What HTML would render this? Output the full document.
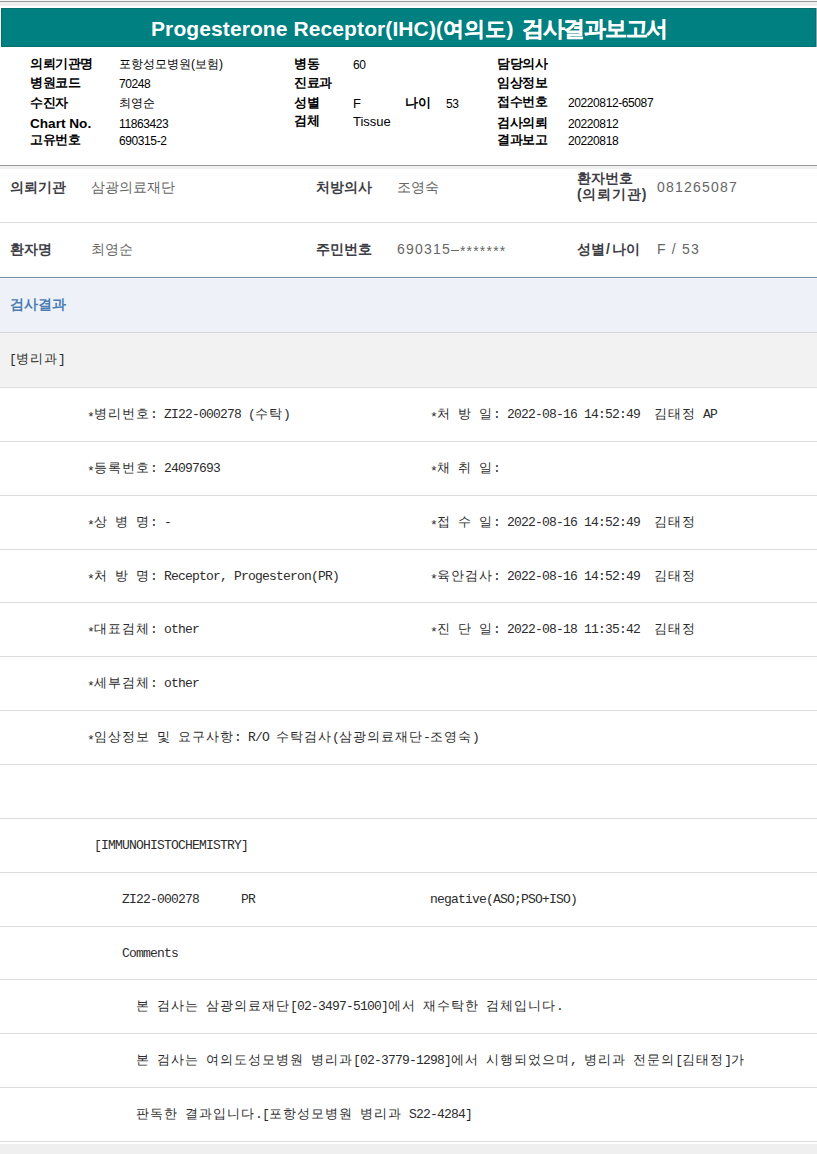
<!DOCTYPE html><html><head><meta charset="utf-8"><style>
*{margin:0;padding:0;box-sizing:border-box}
html,body{width:817px;height:1154px;overflow:hidden;background:#fff}
body{position:relative;font-family:"Liberation Sans",sans-serif;color:#000}
.t{position:absolute;white-space:pre;line-height:20px}
.r{position:absolute;left:0;width:817px}
/* header */
.title1{color:#fff;font-weight:bold;font-size:21px;letter-spacing:0.1px}
.title2{color:#fff;font-weight:bold;font-size:22px;letter-spacing:-1.3px;-webkit-text-stroke:0.2px #fff}
.lb{font-weight:bold;font-size:13px;letter-spacing:-0.5px;color:#000}
.lbe{font-weight:bold;font-size:13.6px;color:#000}
.vk{font-size:12px;color:#000}
.vd{font-size:12px;letter-spacing:-0.4px;color:#000}
.ve{font-size:13px;color:#000}
/* section 2 */
.hl{font-weight:bold;font-size:14px;color:#3d3d45}
.hv{font-size:14px;color:#666}
.hd{font-size:14px;letter-spacing:1.2px;color:#666}
.ast{position:relative;top:2px}
.mast{position:relative;top:3px}
.sec{font-weight:bold;font-size:14px;color:#4a7cb3}
/* mono grid */
.m{font-size:13px;color:#2b2b2b}
.mk{font-size:13px;letter-spacing:1px}
.ma{font-family:"Liberation Mono",monospace;font-size:13px;letter-spacing:-0.8px}
</style></head><body>
<div class="r" style="top:0;height:1px;background:#f6f6f6"></div>
<div class="r" style="top:1px;height:1px;background:#9a9a9a"></div>
<div class="r" style="top:2px;height:4px;background:#efefef"></div>
<div style="position:absolute;left:1px;top:8px;width:815px;height:39px;background:#008080;border:1px solid #0a6e6e"></div>
<div style="position:absolute;left:816px;top:8px;width:1px;height:39px;background:#8aa"></div>
<div class="t title1" style="left:151px;top:19px">Progesterone Receptor(IHC)(<span style="-webkit-text-stroke:0.2px #fff">여의도</span>)</div>
<div class="t title2" style="left:522px;top:19px">검사결과보고서</div>
<div class="t lb" style="left:30px;top:54px">의뢰기관명</div>
<div class="t vk" style="left:119px;top:54px">포항성모병원(보험)</div>
<div class="t lb" style="left:30px;top:73px">병원코드</div>
<div class="t vd" style="left:119px;top:74px">70248</div>
<div class="t lb" style="left:30px;top:92.5px">수진자</div>
<div class="t vk" style="left:119px;top:92.5px">최영순</div>
<div class="t lbe" style="left:30px;top:114px">Chart No.</div>
<div class="t vd" style="left:119px;top:114px">11863423</div>
<div class="t lb" style="left:30px;top:130px">고유번호</div>
<div class="t vd" style="left:119px;top:131px">690315-2</div>
<div class="t lb" style="left:294px;top:54px">병동</div>
<div class="t vd" style="left:353px;top:55px">60</div>
<div class="t lb" style="left:294px;top:73px">진료과</div>
<div class="t lb" style="left:294px;top:92.5px">성별</div>
<div class="t ve" style="left:353px;top:93.5px">F</div>
<div class="t lb" style="left:294px;top:111px">검체</div>
<div class="t ve" style="left:353px;top:112px">Tissue</div>
<div class="t lb" style="left:405px;top:92.5px">나이</div>
<div class="t vd" style="left:446px;top:93.5px">53</div>
<div class="t lb" style="left:497px;top:54px">담당의사</div>
<div class="t lb" style="left:497px;top:73px">임상정보</div>
<div class="t lb" style="left:497px;top:92.3px">접수번호</div>
<div class="t vd" style="left:568px;top:93.3px">20220812-65087</div>
<div class="t lb" style="left:497px;top:113.3px">검사의뢰</div>
<div class="t vd" style="left:568px;top:114.3px">20220812</div>
<div class="t lb" style="left:497px;top:130px">결과보고</div>
<div class="t vd" style="left:568px;top:131px">20220818</div>
<div class="r" style="top:165px;height:1px;background:#9a9a9a"></div>
<div class="r" style="top:166px;height:3px;background:#f0f0f0"></div>
<div class="r" style="top:222px;height:1px;background:#dcdcdc"></div>
<div class="r" style="top:277px;height:1px;background:#7289a2"></div>
<div class="r" style="top:279px;height:53px;background:#eef2f8"></div>
<div class="r" style="top:332px;height:1px;background:#d3d6da"></div>
<div class="r" style="top:333px;height:54px;background:#f2f2f2"></div>
<div class="t hl" style="left:10px;top:176.8px">의뢰기관</div>
<div class="t hv" style="left:91px;top:176.8px">삼광의료재단</div>
<div class="t hl" style="left:316px;top:176.8px">처방의사</div>
<div class="t hv" style="left:397px;top:176.8px">조영숙</div>
<div class="t hl" style="left:577px;top:167.5px">환자번호</div>
<div class="t hl" style="left:577px;top:184px"><span style="letter-spacing:0.8px">(의뢰기관)</span></div>
<div class="t hd" style="left:657px;top:176.8px">081265087</div>
<div class="t hl" style="left:10px;top:238.7px">환자명</div>
<div class="t hv" style="left:91px;top:238.7px">최영순</div>
<div class="t hl" style="left:316px;top:238.7px">주민번호</div>
<div class="t hd" style="left:397px;top:238.7px">690315–<span class="ast">*******</span></div>
<div class="t hl" style="left:577px;top:238.7px">성별<span style="margin:0 2px 0 1px">/</span>나이</div>
<div class="t hd" style="left:657px;top:238.7px">F / 53</div>
<div class="t sec" style="left:10px;top:293.5px">검사결과</div>
<div class="t m" style="left:9px;top:348.8px"><span class="ma">[</span><span class="mk">병리과</span><span class="ma">]</span></div>
<div class="r" style="top:387px;height:1px;background:#dddddd"></div>
<div class="r" style="top:441px;height:1px;background:#dddddd"></div>
<div class="r" style="top:495px;height:1px;background:#dddddd"></div>
<div class="r" style="top:549px;height:1px;background:#dddddd"></div>
<div class="r" style="top:602px;height:1px;background:#dddddd"></div>
<div class="r" style="top:656px;height:1px;background:#dddddd"></div>
<div class="r" style="top:710px;height:1px;background:#dddddd"></div>
<div class="r" style="top:764px;height:1px;background:#dddddd"></div>
<div class="r" style="top:818px;height:1px;background:#dddddd"></div>
<div class="r" style="top:872px;height:1px;background:#dddddd"></div>
<div class="r" style="top:926px;height:1px;background:#dddddd"></div>
<div class="r" style="top:979px;height:1px;background:#dddddd"></div>
<div class="r" style="top:1033px;height:1px;background:#dddddd"></div>
<div class="r" style="top:1087px;height:1px;background:#dddddd"></div>
<div class="r" style="top:1141px;height:1px;background:#dddddd"></div>
<div class="r" style="top:1144px;height:10px;background:#efefef"></div>
<div class="t m" style="left:87px;top:403.9px"><span class="ma"><span class="mast">*</span></span><span class="mk">병리번호</span><span class="ma">:&nbsp;ZI22-000278&nbsp;(</span><span class="mk">수탁</span><span class="ma">)</span></div>
<div class="t m" style="left:430px;top:403.9px"><span class="ma"><span class="mast">*</span></span><span class="mk">처</span><span class="ma">&nbsp;</span><span class="mk">방</span><span class="ma">&nbsp;</span><span class="mk">일</span><span class="ma">:&nbsp;2022-08-16&nbsp;14:52:49&nbsp;&nbsp;</span><span class="mk">김태정</span><span class="ma">&nbsp;AP</span></div>
<div class="t m" style="left:87px;top:457.8px"><span class="ma"><span class="mast">*</span></span><span class="mk">등록번호</span><span class="ma">:&nbsp;24097693</span></div>
<div class="t m" style="left:430px;top:457.8px"><span class="ma"><span class="mast">*</span></span><span class="mk">채</span><span class="ma">&nbsp;</span><span class="mk">취</span><span class="ma">&nbsp;</span><span class="mk">일</span><span class="ma">:</span></div>
<div class="t m" style="left:87px;top:511.6px"><span class="ma"><span class="mast">*</span></span><span class="mk">상</span><span class="ma">&nbsp;</span><span class="mk">병</span><span class="ma">&nbsp;</span><span class="mk">명</span><span class="ma">:&nbsp;-</span></div>
<div class="t m" style="left:430px;top:511.6px"><span class="ma"><span class="mast">*</span></span><span class="mk">접</span><span class="ma">&nbsp;</span><span class="mk">수</span><span class="ma">&nbsp;</span><span class="mk">일</span><span class="ma">:&nbsp;2022-08-16&nbsp;14:52:49&nbsp;&nbsp;</span><span class="mk">김태정</span></div>
<div class="t m" style="left:87px;top:565.5px"><span class="ma"><span class="mast">*</span></span><span class="mk">처</span><span class="ma">&nbsp;</span><span class="mk">방</span><span class="ma">&nbsp;</span><span class="mk">명</span><span class="ma">:&nbsp;Receptor,&nbsp;Progesteron(PR)</span></div>
<div class="t m" style="left:430px;top:565.5px"><span class="ma"><span class="mast">*</span></span><span class="mk">육안검사</span><span class="ma">:&nbsp;2022-08-16&nbsp;14:52:49&nbsp;&nbsp;</span><span class="mk">김태정</span></div>
<div class="t m" style="left:87px;top:619.4px"><span class="ma"><span class="mast">*</span></span><span class="mk">대표검체</span><span class="ma">:&nbsp;other</span></div>
<div class="t m" style="left:430px;top:619.4px"><span class="ma"><span class="mast">*</span></span><span class="mk">진</span><span class="ma">&nbsp;</span><span class="mk">단</span><span class="ma">&nbsp;</span><span class="mk">일</span><span class="ma">:&nbsp;2022-08-18&nbsp;11:35:42&nbsp;&nbsp;</span><span class="mk">김태정</span></div>
<div class="t m" style="left:87px;top:673.2px"><span class="ma"><span class="mast">*</span></span><span class="mk">세부검체</span><span class="ma">:&nbsp;other</span></div>
<div class="t m" style="left:87px;top:727.1px"><span class="ma"><span class="mast">*</span></span><span class="mk">임상정보</span><span class="ma">&nbsp;</span><span class="mk">및</span><span class="ma">&nbsp;</span><span class="mk">요구사항</span><span class="ma">:&nbsp;R/O&nbsp;</span><span class="mk">수탁검사</span><span class="ma">(</span><span class="mk">삼광의료재단</span><span class="ma">-</span><span class="mk">조영숙</span><span class="ma">)</span></div>
<div class="t m" style="left:94px;top:834.8px"><span class="ma">[IMMUNOHISTOCHEMISTRY]</span></div>
<div class="t m" style="left:122px;top:888.6px"><span class="ma">ZI22-000278</span></div>
<div class="t m" style="left:241px;top:888.6px"><span class="ma">PR</span></div>
<div class="t m" style="left:430px;top:888.6px"><span class="ma">negative(ASO;PSO+ISO)</span></div>
<div class="t m" style="left:122px;top:942.5px"><span class="ma">Comments</span></div>
<div class="t m" style="left:136px;top:996.4px"><span class="mk">본</span><span class="ma">&nbsp;</span><span class="mk">검사는</span><span class="ma">&nbsp;</span><span class="mk">삼광의료재단</span><span class="ma">[02-3497-5100]</span><span class="mk">에서</span><span class="ma">&nbsp;</span><span class="mk">재수탁한</span><span class="ma">&nbsp;</span><span class="mk">검체입니다</span><span class="ma">.</span></div>
<div class="t m" style="left:136px;top:1050.2px"><span class="mk">본</span><span class="ma">&nbsp;</span><span class="mk">검사는</span><span class="ma">&nbsp;</span><span class="mk">여의도성모병원</span><span class="ma">&nbsp;</span><span class="mk">병리과</span><span class="ma">[02-3779-1298]</span><span class="mk">에서</span><span class="ma">&nbsp;</span><span class="mk">시행되었으며</span><span class="ma">,&nbsp;</span><span class="mk">병리과</span><span class="ma">&nbsp;</span><span class="mk">전문의</span><span class="ma">[</span><span class="mk">김태정</span><span class="ma">]</span><span class="mk">가</span></div>
<div class="t m" style="left:136px;top:1104.1px"><span class="mk">판독한</span><span class="ma">&nbsp;</span><span class="mk">결과입니다</span><span class="ma">.[</span><span class="mk">포항성모병원</span><span class="ma">&nbsp;</span><span class="mk">병리과</span><span class="ma">&nbsp;S22-4284]</span></div>
</body></html>
